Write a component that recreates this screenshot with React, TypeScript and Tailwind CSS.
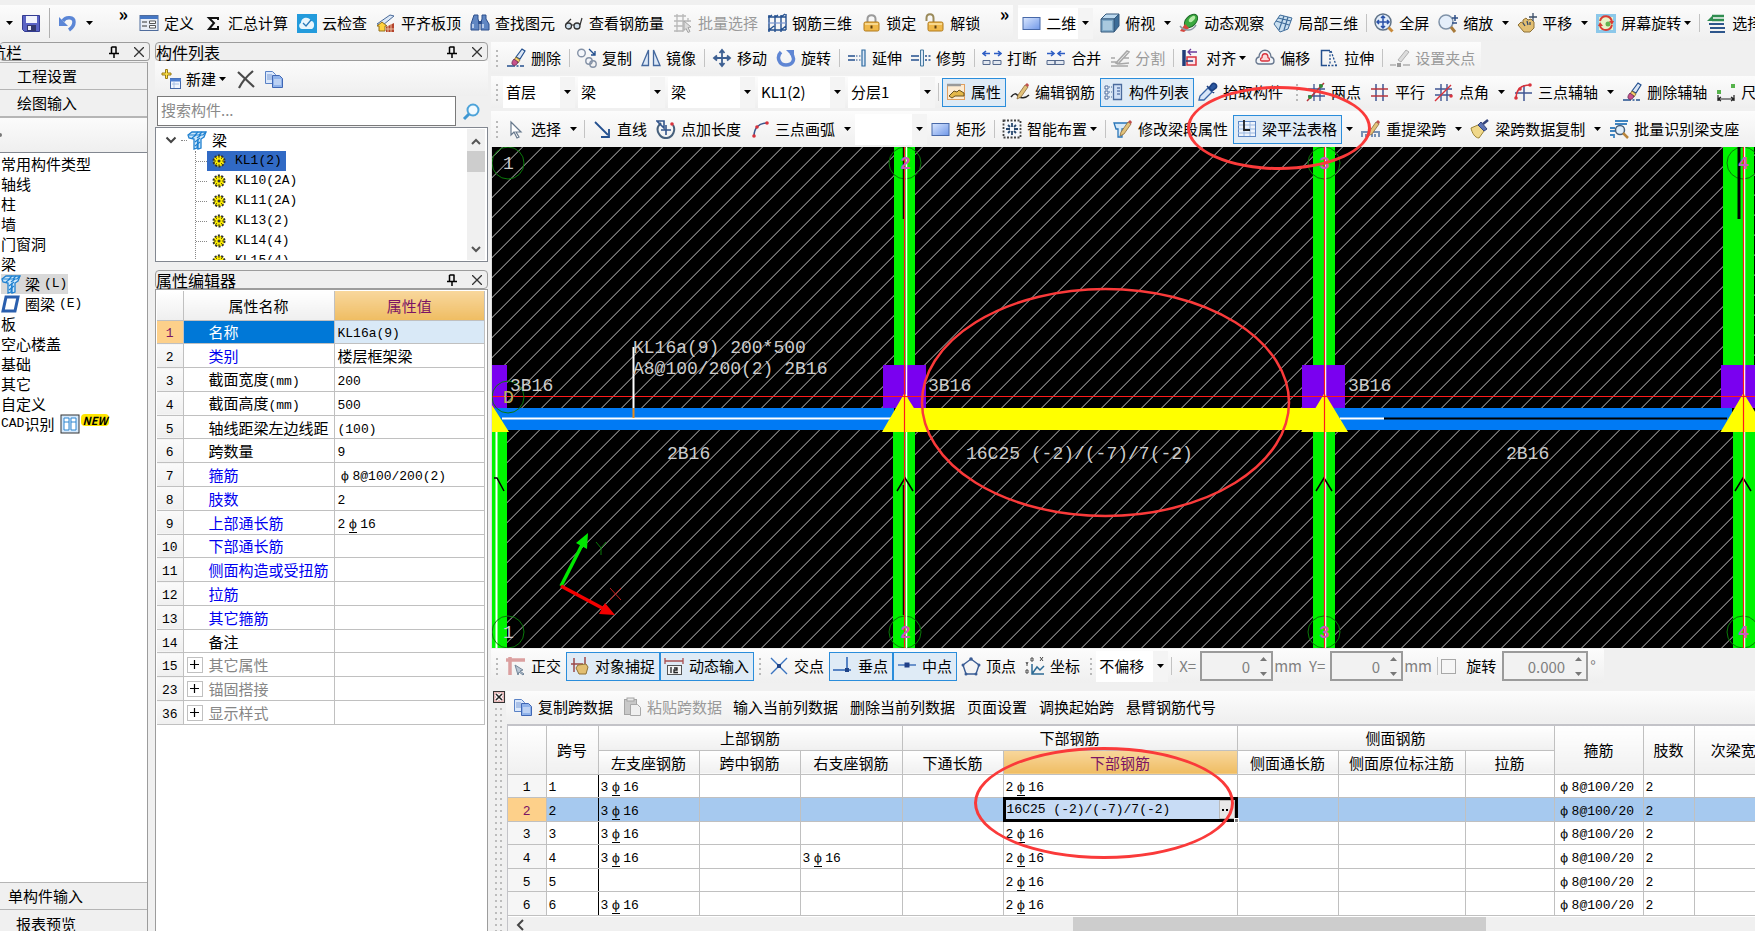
import React, { useState } from 'react';

const B = '#24508f';
const R = '#d8323c';

const pencil = (
  <>
    <path d="M8 13L15 3l3 2-7 10-4 2z" fill="#e2c27a" stroke="#8a6a3a" strokeWidth="0.8" />
    <path d="M15 3l3 2 1-2-2-2z" fill="#c0504d" />
  </>
);

const brush = (
  <>
    <path d="M1 18h17" stroke={B} strokeWidth="1.6" strokeDasharray="8 1.5 2 1.5" />
    <path d="M10 9l6-8 3 2-5 8z" fill="#dbe6f5" stroke={B} strokeWidth="1.2" />
    <path d="M10 9l4 3-2 3-4-3z" fill="#f4d06a" stroke="#75602a" strokeWidth="0.8" />
    <path d="M8 11l4 3c-1 3-3 4-5 3s-1-4 1-6z" fill="#c8528a" stroke="#5d2750" strokeWidth="0.8" />
  </>
);

const copyPages = (
  <>
    <path d="M1.5 2.5h7l3 3v9h-10z" fill="#dbe8fb" stroke="#5a82c6" />
    <path d="M3 6h5M3 8h5M3 10h5" stroke="#7a9bd4" />
    <path d="M8.500 6.500h7l3 3v9h-10z" fill="#8fb2ea" stroke="#3f66b4" />
    <path d="M10 11h7M10 13h7M10 15h7" stroke="#e8f0fd" />
  </>
);

const beam = (
  <>
    <path d="M1 5l4-3h14l-2 5-3 2v9l-3 1V9l-1 9-3 1V9L2 8z" fill="#cfe8fb" stroke="#1f80d0" strokeWidth="1.3" />
    <path d="M2 5h14l3-3M8 5l3-3M12 5l3-3M8 12l5-4M8 16l5-4M5 8l4-3M10 8l4-3" stroke="#1f80d0" strokeWidth="1.2" fill="none" />
  </>
);

const padlock = (
  <>
    <rect x="3" y="9" width="15" height="9" rx="1.500" fill="#efb84a" stroke="#b07a1c" />
    <path d="M4 11h13" stroke="#fbe3a4" strokeWidth="1.500" />
    <path d="M10.500 12.500v3" stroke="#5a3e10" strokeWidth="2" />
  </>
);

const dot4 = (x: number, y: number) => <circle cx={x} cy={y} r="1.800" fill={R} />;

const ICONS: Record<string, React.ReactNode> = {
  save: (
    <>
      <path d="M1.500 2.500h17v16h-15l-2-2z" fill="#5a63c4" stroke="#343c92" />
      <rect x="5" y="3" width="11" height="7" fill="#f2f4fc" />
      <rect x="6" y="12" width="9" height="6" fill="#33386e" />
      <rect x="7" y="13" width="3" height="4" fill="#e8e8f4" />
    </>
  ),
  undo: (
    <>
      <path d="M5 8c3-5 11-4 11 1 0 4-2 6-5 8" fill="none" stroke="#5b86d6" strokeWidth="3.500" />
      <path d="M1 4v9h9z" fill="#5b86d6" />
    </>
  ),
  define: (
    <>
      <rect x="1" y="2.500" width="18" height="15" fill="#e9eef6" stroke="#4f6c9c" />
      <path d="M1 4.500h18" stroke="#4577c4" strokeWidth="3" />
      <path d="M3 9h5M3 13h5" stroke="#333" strokeWidth="1.200" />
      <path d="M10.500 8h6v2.500h-6zM10.500 12.500h6V15h-6z" fill="#fff" stroke="#555" />
    </>
  ),
  sigma: <path d="M15 7V5H6l5 5-5 6h9v-3" fill="none" stroke="#111" strokeWidth="2" />,
  cloud: (
    <>
      <rect x="0" y="1" width="20" height="19" fill="#239bdc" />
      <path d="M5 16c-3 0-4-5-1-6 0-6 8-7 10-2 4 0 4 7 1 8z" fill="#e8f6fd" />
      <path d="M6 10l3 3 5-6" fill="none" stroke="#2a7ab8" strokeWidth="1.300" />
    </>
  ),
  flatTop: (
    <>
      <path d="M1 11L14 2l4 1L7 12z" fill="#dce8f6" stroke="#4a6a9a" />
      <path d="M1 13l5-4 5 4H9v5H3v-5z" fill="#ffd23e" stroke="#94701c" />
      <path d="M10 14l8-4v9h-8z" fill="#b4432c" />
      <path d="M12 13v6M15 11v8M10 16h8" stroke="#e8c0a0" />
    </>
  ),
  binoculars: (
    <>
      <path d="M4 2h4v4l1 3v8H1v-6zM12 2h4v4l3 5v6h-8V9l1-3z" fill="#5f86c2" stroke="#2c4f8c" />
      <path d="M8 8h4v3H8z" fill="#2c4f8c" />
      <path d="M3 11v4M13 11v4" stroke="#d4e2f6" strokeWidth="1.500" />
    </>
  ),
  glasses: (
    <>
      <circle cx="4.500" cy="13" r="3" fill="#cfe0ee" stroke="#333" strokeWidth="1.300" />
      <circle cx="13" cy="13" r="3" fill="#cfe0ee" stroke="#333" strokeWidth="1.300" />
      <path d="M7.500 12h2.500M2 11l5-5M16 12l2-7" stroke="#333" strokeWidth="1.200" fill="none" />
    </>
  ),
  batchSelect: (
    <>
      <path d="M1 3h12M1 8h17M1 13h9M1 18h9M4 1v18M10 1v18M15 5v4" stroke="#b8b8b8" fill="none" strokeWidth="1.300" />
      <path d="M11 8l7 6-3 .5 2 4-2 1-2-4-2 2z" fill="#ddd" stroke="#a5a5a5" />
    </>
  ),
  rebar3d: (
    <>
      <path d="M1 4h18M1 17h18M2 2v17M8 2v17M14 2v17M19 1v16M2 4l3-2M8 4l3-2M14 4l4-3M14 17l5-4M2 17l5-4" stroke={B} fill="none" strokeWidth="1.400" />
      <path d="M1 10h18" stroke="#7a96d0" strokeWidth="1.200" />
    </>
  ),
  lock: (
    <>
      <path d="M6.500 9V6c0-5 8-5 8 0v3" fill="none" stroke="#9a9a9a" strokeWidth="2" />
      {padlock}
    </>
  ),
  unlock: (
    <>
      <path d="M1.500 8V5c0-5 7-5 7 0v4" fill="none" stroke="#9a8a5a" strokeWidth="2" />
      {padlock}
    </>
  ),
  rect: (
    <>
      <defs>
        <linearGradient id="rectFill" x1="0" y1="0" x2="1" y2="1">
          <stop offset="0" stopColor="#dbe8ff" />
          <stop offset="1" stopColor="#6f97e8" />
        </linearGradient>
      </defs>
      <rect x="1" y="4.500" width="17" height="12" fill="url(#rectFill)" stroke="#4768a8" />
    </>
  ),
  cube: (
    <>
      <path d="M1 6l5-5h13l-5 5z" fill="#bcd9ef" stroke="#34597c" />
      <path d="M14 6l5-5v12l-5 6z" fill="#3d6d98" stroke="#34597c" />
      <path d="M1 6h13v13H1z" fill="#7fa9c8" stroke="#34597c" />
      <path d="M3 8h9v9H3z" fill="#a9c9df" />
    </>
  ),
  orbit: (
    <>
      <ellipse cx="12" cy="8" rx="8" ry="5" transform="rotate(-45 12 8)" fill="#3aa83e" stroke="#1d6a28" />
      <ellipse cx="13" cy="6" rx="4" ry="2" transform="rotate(-45 13 6)" fill="#b6eaa8" />
      <path d="M1 18l5-7 4 4-5 4z" fill="#d6453c" />
      <path d="M1 13c5 6 13 5 16-1" fill="none" stroke="#8c96a2" strokeWidth="1.500" />
    </>
  ),
  local3d: (
    <>
      <path d="M1 11l6-9 12 3-4 11-8 3z" fill="#c9dff0" stroke="#3f6c9a" />
      <path d="M3 8l13 4M5 5l13 3M11 3L6 17M15 4l-4 13" stroke="#3f6c9a" fill="none" strokeWidth="1.200" />
    </>
  ),
  fullScreen: (
    <>
      <circle cx="9" cy="9" r="8" fill="#e4eefa" stroke="#5f7288" strokeWidth="1.500" />
      <path d="M9 3v12M3 9h12M7 5l2-2 2 2M7 13l2 2 2-2M5 7L3 9l2 2M13 7l2 2-2 2" stroke="#2a52a8" strokeWidth="1.500" fill="none" />
      <path d="M14.500 14.500l4 4" stroke="#c88a3a" strokeWidth="3" />
    </>
  ),
  zoom: (
    <>
      <circle cx="8" cy="9" r="7" fill="#e4eefa" stroke="#7f92a8" strokeWidth="1.500" />
      <path d="M13 14l4 5" stroke="#a87a3a" strokeWidth="3" />
      <path d="M17 2v6M14 5h6M14 10h5" stroke="#2f4f86" strokeWidth="1.500" />
    </>
  ),
  pan: (
    <>
      <path d="M1 12l3-3 2 1V7l3-2 2 2 3-1 3 3v6l-4 4H7z" fill="#e2bf72" stroke="#8e7136" />
      <path d="M12 4h8M16 0v8M6 10l2 3M10 8l1 4M13 9v3" stroke="#3a4c66" strokeWidth="1.300" />
    </>
  ),
  rotateScreen: (
    <>
      <rect x="0" y="1" width="20" height="19" fill="#8cc8ea" />
      <rect x="3" y="4" width="14" height="13" fill="#e8f2c8" />
      <path d="M4 8c2-7 11-6 12 1M16 12c-2 7-10 6-12 1" fill="none" stroke="#d93c34" strokeWidth="2" />
      <path d="M13 8h5l-2 4zM7 13H2l2-4z" fill="#d93c34" />
      <circle cx="12" cy="11" r="2.500" fill="#62b350" />
    </>
  ),
  floors: (
    <>
      <path d="M5 3h12M5 7h12" stroke="#2f8d50" strokeWidth="2.500" />
      <path d="M2 11h15M3 15h15M3 19h15" stroke="#2d568c" strokeWidth="2" />
      <path d="M0 8l6-6v6z" fill="#2f8d50" />
    </>
  ),
  erase: brush,
  copy: (
    <>
      <circle cx="4.500" cy="5" r="3.800" fill="#f4f6fa" stroke="#8592a6" strokeWidth="1.400" />
      <circle cx="12" cy="13" r="3.200" fill="#f4f6fa" stroke="#8592a6" strokeWidth="1.400" />
      <circle cx="16" cy="16" r="3.200" fill="none" stroke="#8592a6" strokeWidth="1.400" />
      <path d="M12 1l6 6M18 3v4h-4" fill="none" stroke={B} strokeWidth="1.400" />
    </>
  ),
  mirror: (
    <>
      <path d="M7.500 2v15.500H1z" fill="#dce8f7" stroke="#44689e" strokeWidth="1.300" />
      <path d="M12.500 2v15.500H19z" fill="#dce8f7" stroke="#44689e" strokeWidth="1.300" />
    </>
  ),
  move: <path d="M10 2v16M2 10h16M7.500 5L10 2l2.500 3M7.500 15l2.500 3 2.500-3M5 7.500L2 10l3 2.500M15 7.500l3 2.500-3 2.500" fill="none" stroke="#3c5f92" strokeWidth="1.800" />,
  rotate: (
    <>
      <path d="M5 4c-5 5-2 13 5 13s10-6 5-12" fill="none" stroke="#5f86d4" strokeWidth="3.500" />
      <path d="M10 2h8v8z" fill="#5f86d4" />
    </>
  ),
  extend: (
    <>
      <path d="M1 8h7M1 12h7" stroke={B} strokeWidth="1.500" />
      <path d="M9 8h6M9 12h6" stroke={B} strokeDasharray="1.500 1.500" />
      <path d="M15 2h3v16h-3z" fill="#dce8f7" stroke="#2e6aa0" strokeWidth="1.200" />
    </>
  ),
  trim: (
    <>
      <path d="M0 8h8M0 12h8" stroke={B} strokeWidth="1.300" />
      <path d="M14 8h6M14 12h6" stroke={B} strokeDasharray="2 1.500" strokeWidth="1.300" />
      <path d="M9.500 2h3v16h-3z" fill="#dce8f7" stroke="#44789e" />
    </>
  ),
  breakLine: (
    <>
      <path d="M1 12.500h7v4H1zM11 12.500h8v4h-8z" fill="#e3e8f0" stroke="#55698c" />
      <path d="M1 5.500h7M4 3L1 5.500 4 8M12 5.500h7M16 3l3 2.500L16 8" fill="none" stroke="#2d5dc4" strokeWidth="1.600" />
    </>
  ),
  merge: (
    <>
      <path d="M1 12.500h8v4H1zM9 12.500h9v4H9z" fill="#e3e8f0" stroke="#55698c" />
      <path d="M1 5.500h7M5 3l3 2.500L5 8M12 5.500h7M15 3l-3 2.500L15 8" fill="none" stroke="#2d5dc4" strokeWidth="1.600" />
    </>
  ),
  split: <path d="M1 14h7M9 16l10-1M1 18h17M6 15L17 3l2 1-11 12zM1 10h4M13 10h6" fill="none" stroke="#a8a8a8" strokeWidth="1.600" />,
  align: (
    <>
      <path d="M3 2v16" fill="none" stroke="#203c78" strokeWidth="3.500" />
      <path d="M8 4h8M10 1L7 4l3 3" fill="none" stroke="#6a3a9c" strokeWidth="1.300" />
      <path d="M6 9h9v8H6z" fill="#fbe4ea" stroke={R} strokeWidth="1.500" />
      <path d="M5 13h7" stroke="#203c78" strokeWidth="1.500" />
    </>
  ),
  offset: (
    <>
      <path d="M4 16c-4 0-4-6 0-7 0-9 12-9 12 0 4 1 4 7 0 7z" fill="#f3f5f8" stroke="#67778e" strokeWidth="1.300" />
      <path d="M7 13c-2 0-2-3 0-3.500 0-5 6-5 6 0 2 .5 2 3.500 0 3.500z" fill="#fbd9d9" stroke={R} strokeWidth="1.300" />
    </>
  ),
  stretch: (
    <>
      <path d="M11 2.500H2.500v15H8" fill="none" stroke={B} strokeWidth="1.500" />
      <path d="M11 3v14M12 3l5 14M9 17.500h9" fill="none" stroke={B} strokeDasharray="2 1.500" strokeWidth="1.300" />
    </>
  ),
  grip: (
    <>
      <path d="M0 17h6M13 17h7" stroke="#b0b0b0" strokeWidth="1.500" />
      <path d="M7 15h4v4H7z" fill="#9a9a9a" />
      <path d="M8 12L16 2l3 2-8 10z" fill="#dcdcdc" stroke="#b0b0b0" />
    </>
  ),
  props: (
    <>
      <rect x="1.500" y="2.500" width="17" height="15" fill="#fdebd2" stroke="#e0a060" />
      <path d="M1 3h14" stroke="#9a9a9a" strokeWidth="2.500" />
      <path d="M3 14l5-5 3 1 2-2 5 3v3H9l-3 2z" fill="#e4b84a" stroke="#6b5420" />
    </>
  ),
  editRebar: (
    <>
      <path d="M1 15c3-4 5-4 7-1s8 2 11-1" fill="none" stroke="#222" strokeWidth="1.500" />
      {pencil}
    </>
  ),
  listPanel: (
    <>
      <path d="M1 4h3v3H1zM1 9h3v3H1zM1 14h3v3H1z" fill="#fff" stroke="#4a6a9c" />
      <path d="M5 5h3M5 10h3M5 15h3" stroke="#4a6a9c" strokeDasharray="1 1" />
      <path d="M9.500 2.500h8v15h-8z" fill="#cfe0f6" stroke="#4a6a9c" strokeWidth="1.300" />
      <path d="M13 6h3M13 9h3M13 12h3" stroke="#2c4f8c" />
    </>
  ),
  picker: (
    <>
      <path d="M1 18l1-4 8-8 4 4-8 8z" fill="#d8e6f8" stroke="#3a66a6" strokeWidth="1.300" />
      <path d="M9 4l7 7M11 6l3-4c2-2 6 1 4 4l-4 3z" fill="#2c58a0" stroke="#1c3f80" strokeWidth="1.600" />
    </>
  ),
  twoPoint: (
    <>
      <path d="M8 2v17M14 2v17M2 7h17M2 14h17" stroke="#3f5692" strokeWidth="1.300" />
      <path d="M1 19L18 1" stroke="#b8343c" strokeWidth="1.500" />
      <circle cx="4" cy="15" r="2" fill="#328a38" /><circle cx="15" cy="4" r="2" fill="#328a38" />
    </>
  ),
  parallel: (
    <>
      <path d="M6 2v17M13 2v17" stroke="#3f5692" strokeWidth="1.500" />
      <path d="M1 7h17M1 14h17" stroke="#b8343c" strokeWidth="1.500" />
    </>
  ),
  pointAngle: (
    <>
      <path d="M7 2v17M13 2v17M1 7h17M1 13h17" stroke="#3f5692" strokeWidth="1.400" />
      <path d="M1 19L17 3" stroke={R} strokeWidth="1.500" />
      {dot4(17, 14)}
    </>
  ),
  threePoint: (
    <>
      <path d="M2 11h17M11 3v16" stroke="#3f5692" strokeWidth="1.500" />
      <path d="M3 17C3 8 7 3 17 3" fill="none" stroke={R} strokeWidth="1.500" />
      {dot4(3, 16)}{dot4(17, 3)}{dot4(7, 7)}
    </>
  ),
  dimension: (
    <>
      <path d="M2 17h16M2 13v6M18 13v6M5 15l-3 2 3 2M15 15l3 2-3 2" fill="none" stroke="#222" strokeWidth="1.200" />
      <path d="M1 8h4v4H1zM15 2h4v4h-4z" fill="#56b34c" />
    </>
  ),
  pointer: <path d="M5 3v13l3-3 3 6 2-1-3-5h5z" fill="#fff" stroke="#66788c" strokeWidth="1.200" />,
  line: (
    <>
      <path d="M3 3l13 13" stroke={B} strokeWidth="1.800" />
      <path d="M17 10v8H9" fill="none" stroke={B} strokeWidth="1.800" />
    </>
  ),
  addLength: (
    <>
      <path d="M5 4c-8 7 0 16 6 15s9-8 6-13" fill="none" stroke="#46607c" strokeWidth="2" />
      <path d="M1 2h7v7zM10 6v10M5 11h10" fill="none" stroke="#34568c" strokeWidth="1.600" />
      {dot4(16, 5)}
    </>
  ),
  arc: (
    <>
      <path d="M4 17C4 9 9 4 17 4" fill="none" stroke="#3a568c" strokeWidth="1.600" />
      {dot4(4, 17)}{dot4(7, 8)}{dot4(17, 4)}
    </>
  ),
  smart: (
    <>
      <rect x="1.500" y="1.500" width="17" height="17" fill="#f4f7fb" stroke="#444" strokeDasharray="2 1.500" strokeWidth="1.800" />
      <path d="M10 4v4M10 12v4M4 10h4M12 10h4M6 6l2 2M14 6l-2 2M6 14l2-2M14 14l-2-2" stroke="#26476e" strokeWidth="1.800" />
    </>
  ),
  editSpan: (
    <>
      <path d="M1 4h14l-3 6H9v8H5v-8H3z" fill="#d6eafa" stroke="#2a76b8" strokeWidth="1.300" />
      {pencil}
    </>
  ),
  beamTable: (
    <>
      <rect x="1.500" y="2.500" width="17" height="15" fill="#eef4fc" stroke="#5c86c4" />
      <path d="M1 6h17M1 10h17M1 14h17M7 3v14M13 3v14" stroke="#9bb8e0" />
      <path d="M7 1v10h6" fill="none" stroke="#222" strokeWidth="1.800" />
    </>
  ),
  reSpan: (
    <>
      <path d="M1 18v-5h17v5M5 18v-3M11 18v-3M14 18v-3" fill="none" stroke="#7590b4" strokeWidth="2" />
      {pencil}
    </>
  ),
  broom: (
    <>
      <path d="M1 9l7-3 6 6-5 7c-4 0-7-5-8-10z" fill="#f0d88a" stroke="#9c8438" />
      <path d="M8 6l6 6 3-2-6-7z" fill="#5d73b4" stroke="#34447c" />
      <path d="M13 5l5-4" stroke="#34447c" strokeWidth="2.500" />
    </>
  ),
  recognize: (
    <>
      <path d="M6 2h13M6 5h12M1 9h5M1 12h5M1 16h4v3" fill="none" stroke="#3f84c0" strokeWidth="1.800" />
      <circle cx="11" cy="11" r="4.500" fill="#e0eefa" stroke="#46607c" strokeWidth="1.500" />
      <path d="M14 14l5 5" stroke="#b8843a" strokeWidth="2.500" />
    </>
  ),
  ortho: (
    <>
      <path d="M0 4h19M4 1v18" stroke="#dba0a0" strokeWidth="3.500" />
      <path d="M9 9l8 5-3 1 4 3-1 1-4-3-1 3z" fill="#b9c6d4" stroke="#74879a" />
    </>
  ),
  snap: (
    <>
      <path d="M1 8h12M4 2v14M15 1v7" stroke="#9c4a4a" strokeWidth="1.500" />
      <path d="M6 12l2-3 8-1 2 3-2 7H9z" fill="#e2bf72" stroke="#8e7136" />
    </>
  ),
  dynInput: (
    <>
      <path d="M1 5h18M1 2v6M19 2v6" stroke="#a85050" strokeWidth="1.300" />
      <rect x="3.500" y="9.500" width="14" height="9" fill="#f4f4f4" stroke="#555" />
      <path d="M7 11v6M10 12h3v2h-3v2.500h4" fill="none" stroke="#222" strokeWidth="1.300" />
    </>
  ),
  cross: (
    <>
      <path d="M2 2l16 16M18 2L2 18" stroke="#3a74c0" strokeWidth="1.400" />
      <path d="M8 8h4v4H8z" fill="#1f4488" />
    </>
  ),
  perp: (
    <>
      <path d="M0 14h18M14 1v13" stroke="#2a62b4" strokeWidth="1.500" />
      <path d="M12 12h4v4h-4z" fill="#1f4488" />
    </>
  ),
  mid: (
    <>
      <path d="M1 9h18" stroke="#2a62b4" strokeWidth="1.300" />
      <path d="M7.500 6.500h5v5h-5z" fill="#1f3f88" />
    </>
  ),
  vertex: (
    <>
      <path d="M10 3l8 6-3 9H5L2 9z" fill="none" stroke="#3a5c94" strokeWidth="1.400" />
      <circle cx="10" cy="3" r="1.800" fill="#3a5c94" /><circle cx="18" cy="9" r="1.500" fill="#3a5c94" /><circle cx="2" cy="9" r="1.500" fill="#3a5c94" />
      <circle cx="5" cy="18" r="1.500" fill="#3a5c94" /><circle cx="15" cy="18" r="1.500" fill="#3a5c94" />
    </>
  ),
  coord: (
    <>
      <path d="M7 8v10h12M7 18l5-7 3 3 4-4" fill="none" stroke="#2c6a94" strokeWidth="1.500" />
      <path d="M1 6l1 2 1-2M2 8v2M15 1l3 4M18 1l-3 4M6 2h2v3H6zM1 14h2v3H1z" fill="none" stroke="#444" />
    </>
  ),
  copyPages,
  paste: (
    <>
      <rect x="2.500" y="2.500" width="12" height="15" fill="#c8c8c8" stroke="#a4a4a4" />
      <rect x="5" y="1" width="7" height="3" fill="#e8e8e8" stroke="#a4a4a4" />
      <path d="M8.500 7.500h7l3 3v8h-10z" fill="#efefef" stroke="#a8a8a8" />
    </>
  ),
  create: (
    <>
      <path d="M4.500 0.500h2v3.500H10v2H6.500v3.500h-2V6H1V4h3.500z" fill="#ffe44a" stroke="#9a7a14" />
      <rect x="9.500" y="9.500" width="10" height="10" fill="#f2f6fd" stroke="#4468a8" />
      <path d="M9 11h11" stroke="#4f7fd0" strokeWidth="3" />
      <path d="M11 15h7M13 13v6" stroke="#a8c0e4" />
    </>
  ),
  remove: <path d="M2 3l16 15M17 2C11 7 6 13 3 19" fill="none" stroke="#4a4a4a" strokeWidth="2.200" />,
  search: (
    <>
      <circle cx="11" cy="8" r="5.500" fill="#f2faff" stroke="#4da3d9" strokeWidth="2" />
      <path d="M7 12l-5 5" stroke="#3f97d2" strokeWidth="3" />
    </>
  ),
  beam,
  ringBeam: <path d="M5 3h12l-3 14H2z" fill="#fff" stroke="#2a5fae" strokeWidth="3" />,
  cad: (
    <>
      <rect x="1" y="1" width="18" height="18" fill="#d4e8fb" stroke="#333" />
      <path d="M4 4h5v12H4zM11 4h5v12h-5zM4 8h5M11 8h5" fill="#fff" stroke="#2f86d0" />
    </>
  ),
};

function Icon({ name }: { name: string }) {
  return (
    <svg className="w-5 h-5 shrink-0" viewBox="0 0 20 20" aria-hidden="true">
      {ICONS[name]}
    </svg>
  );
}

function Tri() {
  return (
    <svg className="w-[7px] h-1 shrink-0" viewBox="0 0 7 4" aria-hidden="true">
      <path d="M0 0h7L3.500 4z" fill="#000" />
    </svg>
  );
}

type ToolProps = {
  icon?: string;
  label: string;
  pressed?: boolean;
  disabled?: boolean;
  menu?: boolean;
  split?: boolean;
};

function Tool({ icon, label, pressed, disabled, menu, split }: ToolProps) {
  const box = pressed ? 'border-[#2a8ddb] bg-[#dfebf6]' : 'border-transparent';
  const pad = icon ? 'pl-[3px] pr-1' : 'px-[5px]';
  return (
    <>
      <button
        disabled={disabled}
        className={`flex items-center gap-[5px] h-[29px] shrink-0 border whitespace-nowrap ${box} ${pad} ${disabled ? 'text-[#9a9a9a]' : 'text-black'}`}
      >
        {icon && <Icon name={icon} />}
        <span className="flex items-center gap-[3px]">
          {label}
          {menu && <Tri />}
        </span>
      </button>
      {split && (
        <button aria-label={`${label}菜单`} className="flex items-center justify-center w-[15px] h-[29px] shrink-0">
          <Tri />
        </button>
      )}
    </>
  );
}

function Sep() {
  return (
    <span className="w-[7px] shrink-0 flex justify-center">
      <span className="w-px h-[18px] bg-[#c3c3c3]" />
    </span>
  );
}

function Grip() {
  return (
    <span className="w-[10px] shrink-0 flex flex-col items-center gap-[3px]">
      {[0, 1, 2, 3].map(i => <i key={i} className="w-[2px] h-[2px] bg-[#b9b9b9]" />)}
    </span>
  );
}

function Combo({ label, value, width, icon }: { label: string; value: string; width: string; icon?: string }) {
  return (
    <label className={`relative flex items-center h-[31px] shrink-0 bg-white ${icon ? 'pl-1 gap-[1px]' : ''} ${width}`}>
      {icon && <Icon name={icon} />}
      <select aria-label={label} className="appearance-none flex-1 min-w-0 h-full pl-[3px] bg-transparent">
        <option>{value}</option>
      </select>
      <span className="absolute right-0 inset-y-0 w-[15px] bg-[#f4f4f4] flex items-center justify-center pointer-events-none">
        <Tri />
      </span>
    </label>
  );
}

function NumberField({ label, value, width }: { label: string; value: string; width: string }) {
  return (
    <span className={`relative h-[30px] shrink-0 border-2 border-[#9b9b9b] ${width}`}>
      <input aria-label={label} defaultValue={value} disabled className="w-full h-full pr-[21px] text-right text-[#808080] bg-[#f2f2f2]" />
      <svg className="absolute right-1 top-1 w-[7px] h-[19px]" viewBox="0 0 7 19" aria-hidden="true">
        <path d="M0 4l3.500-4L7 4zM0 15h7L3.500 19z" fill="#777" />
      </svg>
    </span>
  );
}

function PanelHeader({ title, clipped }: { title: string; clipped?: boolean }) {
  return (
    <header className={`flex items-center h-[19px] border border-[#9c9c9c] rounded-sm bg-[#efefef] shrink-0 ${clipped ? 'border-l-0' : ''}`}>
      <h2 className={`text-base leading-none whitespace-nowrap ${clipped ? 'w-[22px] overflow-hidden flex justify-end' : ''}`}>{title}</h2>
      <button aria-label={`固定${title}`} className="ml-auto mr-[15px]">
        <svg className="w-[10px] h-3" viewBox="0 0 10 12"><path d="M2.500 1v6M2.500 1h5M7 1v6M0 7.500h10M5 8v4" fill="none" stroke="#000" strokeWidth="1.500" /></svg>
      </button>
      <button aria-label={`关闭${title}`} className="mr-[5px]">
        <svg className="w-[10px] h-[10px]" viewBox="0 0 10 10"><path d="M0 0l10 10M10 0L0 10" stroke="#333" strokeWidth="1.300" /></svg>
      </button>
    </header>
  );
}

const Mono = ({ children }: { children: React.ReactNode }) => <span className="font-['Liberation_Mono',monospace] text-[13px]">{children}</span>;

// "B" marks the second rebar grade, drawn as a phi standing on a bar
function Rebar({ value }: { value: string }) {
  return (
    <Mono>
      {value.split(/([AB](?=\d))/).map((part, i) => {
        if (part === 'A') return <span key={i} className="inline-block w-[15px] text-center">ф</span>;
        if (part === 'B') return <span key={i} className="inline-block w-[15px] text-center"><span className="border-b border-black">ф</span></span>;
        return part;
      })}
    </Mono>
  );
}

const NAV_TOP = ['常用构件类型', '轴线', '柱', '墙', '门窗洞', '梁'];
const NAV_REST = ['板', '空心楼盖', '基础', '其它', '自定义'];
const BEAMS = ['KL1(2)', 'KL10(2A)', 'KL11(2A)', 'KL13(2)', 'KL14(4)', 'KL15(4)'];

type Prop = { no: number; name: string; unit?: string; value?: React.ReactNode; kind?: 'blue' | 'group' };

const PROPS: Prop[] = [
  { no: 1, name: '名称', value: <Mono>KL16a(9)</Mono> },
  { no: 2, name: '类别', value: '楼层框架梁', kind: 'blue' },
  { no: 3, name: '截面宽度', unit: '(mm)', value: <Mono>200</Mono> },
  { no: 4, name: '截面高度', unit: '(mm)', value: <Mono>500</Mono> },
  { no: 5, name: '轴线距梁左边线距', value: <Mono>(100)</Mono> },
  { no: 6, name: '跨数量', value: <Mono>9</Mono> },
  { no: 7, name: '箍筋', value: <Rebar value="A8@100/200(2)" />, kind: 'blue' },
  { no: 8, name: '肢数', value: <Mono>2</Mono>, kind: 'blue' },
  { no: 9, name: '上部通长筋', value: <Rebar value="2B16" />, kind: 'blue' },
  { no: 10, name: '下部通长筋', kind: 'blue' },
  { no: 11, name: '侧面构造或受扭筋', kind: 'blue' },
  { no: 12, name: '拉筋', kind: 'blue' },
  { no: 13, name: '其它箍筋', kind: 'blue' },
  { no: 14, name: '备注' },
  { no: 15, name: '其它属性', kind: 'group' },
  { no: 23, name: '锚固搭接', kind: 'group' },
  { no: 36, name: '显示样式', kind: 'group' },
];

const SPANS = [
  { no: 1, left: '3B16', right: '', bottom: '2B16' },
  { no: 2, left: '3B16', right: '', bottom: '16C25 (-2)/(-7)/7(-2)' },
  { no: 3, left: '3B16', right: '', bottom: '2B16' },
  { no: 4, left: '3B16', right: '3B16', bottom: '2B16' },
  { no: 5, left: '', right: '', bottom: '2B16' },
  { no: 6, left: '3B16', right: '', bottom: '2B16' },
];

function NavPanel() {
  return (
    <aside className="w-[150px] shrink-0 flex flex-col">
      <PanelHeader title="导航栏" clipped />
      <div className="mt-px mr-[2px] flex-1 min-h-0 flex flex-col border-r border-[#9c9c9c]">
        <button className="h-7 shrink-0 pl-[17px] text-left border-t border-b border-[#b5b5b5] bg-[#f0f0f0]">工程设置</button>
        <button className="h-7 shrink-0 pl-[17px] text-left border-b-2 border-[#b5b5b5] bg-[#f0f0f0]">绘图输入</button>
        <div className="h-[34px] shrink-0 bg-linear-to-b from-[#fbfbfb] to-[#efefef] flex items-center">
          <i className="w-[2px] h-1 rounded-r bg-[#777]" />
        </div>
        <ul className="flex-1 min-h-0 overflow-hidden bg-white border-t border-[#828790] pt-px pl-[1px] leading-5">
          {NAV_TOP.map(t => <li key={t}>{t}</li>)}
          <li className="flex"><span className="flex gap-1 w-[67px] bg-[#d9d9d9]"><Icon name="beam" />梁<Mono>(L)</Mono></span></li>
          <li className="flex gap-1"><Icon name="ringBeam" />圈梁<Mono>(E)</Mono></li>
          {NAV_REST.map(t => <li key={t}>{t}</li>)}
          <li className="flex">
            <Mono>CAD</Mono>识别
            <span className="ml-[6px]"><Icon name="cad" /></span>
            <b className="self-start bg-[#ffe600] rounded-sm px-px ml-px text-[11px] leading-3 italic">NEW</b>
          </li>
        </ul>
        <button className="h-7 shrink-0 pl-2 text-left border-t border-b border-[#b5b5b5] bg-[#f0f0f0]">单构件输入</button>
        <button className="h-[21px] shrink-0 pl-4 text-left bg-[#f0f0f0] overflow-hidden leading-7">报表预览</button>
      </div>
    </aside>
  );
}

function Gear() {
  return (
    <svg className="w-[14px] h-[14px] shrink-0" viewBox="0 0 14 14" aria-hidden="true">
      <circle cx="7" cy="7" r="5.500" fill="#ffee00" stroke="#333" strokeWidth="2" strokeDasharray="2 1.450" />
      <path d="M7 2v10M2 7h10M3.500 3.500l7 7M10.500 3.500l-7 7" stroke="#55500a" />
      <circle cx="7" cy="7" r="3" fill="#ffee00" />
      <circle cx="7" cy="7" r="1.500" fill="#333" />
    </svg>
  );
}

function BeamTree() {
  const [selected, setSelected] = useState('KL1(2)');
  return (
    <div className="h-[135px] shrink-0 flex bg-white border border-[#828790] p-px pr-[2px]">
      <div className="flex-1 overflow-hidden leading-5 pt-px">
        <div className="flex items-center h-5 pl-2">
          <svg className="w-3 h-3" viewBox="0 0 12 12"><path d="M1.500 3.500L6 8l4.500-4.500" fill="none" stroke="#444" strokeWidth="2" /></svg>
          <i className="w-[6px] ml-1 border-t border-dotted border-[#888]" />
          <Icon name="beam" />
          <span className="ml-[5px]">梁</span>
        </div>
        <ul className="mt-px ml-[38px] border-l border-dotted border-[#888]">
          {BEAMS.map(b => (
            <li key={b} className="flex items-center h-5">
              <i className="w-[11px] border-t border-dotted border-[#888]" />
              <button onClick={() => setSelected(b)} className={`flex items-center gap-[9px] h-5 pl-[5px] pr-1 ${selected === b ? 'bg-[#316ac5]' : ''}`}>
                <Gear />
                <Mono>{b}</Mono>
              </button>
            </li>
          ))}
        </ul>
      </div>
      <div className="w-[18px] bg-[#f0f0f0] flex flex-col items-center">
        <svg className="w-[10px] h-[22px]" viewBox="0 0 10 22"><path d="M1 15l4-4 4 4" fill="none" stroke="#555" strokeWidth="2" /></svg>
        <i className="w-full h-[21px] bg-[#cdcdcd]" />
        <svg className="w-[10px] h-[22px] mt-auto" viewBox="0 0 10 22"><path d="M1 9l4 4 4-4" fill="none" stroke="#555" strokeWidth="2" /></svg>
      </div>
    </div>
  );
}

function PropertyTable() {
  return (
    <div className="flex-1 min-h-0 bg-white border border-b-0 border-[#9c9c9c] pt-px pl-px pr-[2px] overflow-hidden">
      <table className="w-full h-[434px] table-fixed border-collapse leading-none">
        <colgroup>
          <col className="w-[26px]" />
          <col className="w-[151px]" />
          <col />
        </colgroup>
        <thead>
          <tr className="h-[29px]">
            <th className="bg-linear-to-b from-white to-[#efefef] border-r border-b border-[#c0c0c0]" />
            <th className="bg-linear-to-b from-white to-[#efefef] border-r border-b border-[#c0c0c0] font-normal">属性名称</th>
            <th className="bg-linear-to-b from-[#f8d79c] to-[#efbd62] border-r border-b border-[#c0c0c0] font-normal text-[#7b1464]">属性值</th>
          </tr>
        </thead>
        <tbody>
          {PROPS.map(p => {
            const active = p.no === 1;
            const tone = active ? 'bg-[#0078d7] text-white' : p.kind === 'blue' ? 'text-[#0000f0]' : p.kind === 'group' ? 'text-[#868686]' : '';
            return (
              <tr key={p.no}>
                <th className={`border-r border-b border-[#c0c0c0] p-0 font-normal ${active ? 'bg-[#fdd08a] text-[#7b1464]' : 'bg-linear-to-b from-[#fafafa] to-[#efefef]'}`}><Mono>{p.no}</Mono></th>
                <td className={`border-r border-b border-[#c0c0c0] p-0 whitespace-nowrap ${tone}`}>
                  <div className="flex items-center">
                    <span className="w-[25px] shrink-0 pl-[3px]">
                      {p.kind === 'group' && (
                        <button aria-label={`展开${p.name}`} className="w-4 h-4 border border-[#c0c0c0] bg-white text-black flex items-center justify-center">
                          <svg className="w-[9px] h-[9px]" viewBox="0 0 9 9"><path d="M0 4.500h9M4.500 0v9" stroke="#000" strokeWidth="1.200" /></svg>
                        </button>
                      )}
                    </span>
                    <span>{p.name}{p.unit && <Mono>{p.unit}</Mono>}</span>
                  </div>
                </td>
                <td className={`border-r border-b border-[#c0c0c0] py-0 px-[3px] whitespace-nowrap ${active ? 'bg-[#d9e9f7]' : ''}`}>{p.value}</td>
              </tr>
            );
          })}
        </tbody>
      </table>
    </div>
  );
}

function ComponentPanel() {
  return (
    <aside className="w-[333px] shrink-0 ml-[5px] flex flex-col">
      <PanelHeader title="构件列表" />
      <div className="flex items-center h-[35px] shrink-0 pl-[2px] bg-linear-to-b from-[#fbfbfb] to-[#efefef]">
        <Tool icon="create" label="新建" menu />
        <button aria-label="删除构件" className="ml-[5px]"><Icon name="remove" /></button>
        <button aria-label="复制构件" className="ml-2"><Icon name="copyPages" /></button>
      </div>
      <div className="flex h-[31px] shrink-0 pl-[2px]">
        <input aria-label="搜索构件" placeholder="搜索构件..." className="flex-1 min-w-0 h-[30px] pl-[3px] pb-1 bg-white border border-[#7a7a7a] placeholder:text-[#8a8a8a]" />
        <button aria-label="搜索" className="w-8 flex items-center justify-center"><Icon name="search" /></button>
      </div>
      <BeamTree />
      <div className="h-2 shrink-0" />
      <PanelHeader title="属性编辑器" />
      <PropertyTable />
    </aside>
  );
}

function Column({ x, left, width, lowLeft }: { x: number; left: number; width: number; lowLeft: number }) {
  return (
    <g>
      <rect x={left} y="0" width={width} height="218" fill="#00f400" />
      <rect x={lowLeft} y="283" width="22" height="218" fill="#00f400" />
      <rect x={x - 22} y="218" width="43" height="43" fill="#7a00f0" />
      <circle cx={x} cy="16" r="16" fill="none" stroke="#0a7a0a" />
      <circle cx={x} cy="485" r="16" fill="none" stroke="#0a7a0a" />
      <path d={`M${x + 1.5} 0V261M${x + 1.5} 285V501`} stroke="#fff" strokeWidth="1.500" />
      <path d={`M${x - 8} 344l8-13 8 13`} fill="none" stroke="#000" strokeWidth="1.500" />
    </g>
  );
}

function PlanView() {
  return (
    <svg className="block w-full h-full bg-black border-l border-[#ddd] font-['Liberation_Mono',monospace]" viewBox="0 0 1264 501" preserveAspectRatio="xMinYMin slice" role="img" aria-label="梁平面图">
      <defs>
        <pattern id="hatch" width="20" height="20" patternUnits="userSpaceOnUse">
          <path d="M-1 11.600L11.600 -1M9.600 21L21 9.600" stroke="#c4c4c4" strokeWidth="1" />
        </pattern>
      </defs>
      <rect width="1264" height="501" fill="url(#hatch)" />

      <rect x="0" y="218" width="15" height="43" fill="#7a00f0" />
      <rect x="0" y="283" width="15" height="218" fill="#00f400" />
      <path d="M4.500 283V501" stroke="#fff" strokeWidth="2" />
      <path d="M2 331l3 0 7 13" fill="none" stroke="#000" strokeWidth="1.500" />
      <Column x={413} left={402} width={21} lowLeft={401} />
      <Column x={832} left={821} width={22} lowLeft={821} />
      <Column x={1251} left={1231} width={31} lowLeft={1241} />
      <path d="M411.500 0v72M411.500 338v130" stroke="#000" strokeWidth="1.500" />
      <path d="M1247 0v72" stroke="#000" strokeWidth="3" />

      <rect x="0" y="261" width="402" height="22" fill="#007af4" />
      <path d="M10 271.500H400" stroke="#fff" strokeWidth="1.800" />
      <rect x="840" y="261" width="400" height="22" fill="#007af4" />
      <path d="M848 271.500h44" stroke="#fff" strokeWidth="1.800" />
      <path d="M892 271.500h343" stroke="#000" strokeWidth="1.800" />
      <rect x="413" y="261" width="420" height="22" fill="#ff0" />
      <path d="M0 258l17 27H0zM412.500 246l24.500 39h-47zM832.500 246l23.500 39h-47zM1251.500 246l24 39h-47z" fill="#ff0" />
      <path d="M0 249.500h1264M412.500 0v501M832.500 0v501M1251.500 0v501" stroke="#ff1a1a" strokeWidth="1.200" />

      <path d="M141.500 200v61" stroke="#fff" strokeWidth="2" />
      <path d="M141.500 261v10" stroke="#e88a1a" strokeWidth="2" />

      <g fill="none" stroke="#0a7a0a">
        <circle cx="16" cy="16" r="16" /><circle cx="16" cy="250" r="16" /><circle cx="16" cy="485" r="16" />
      </g>
      <g fontSize="18" fill="#c65cc0" fontWeight="bold">
        <text x="408" y="22">2</text><text x="408" y="491">2</text>
        <text x="827" y="22">3</text><text x="827" y="491">3</text>
        <text x="1246" y="22">4</text><text x="1246" y="491">4</text>
      </g>
      <g fontSize="18" fill="#cccccc">
        <text x="11" y="22">1</text>
        <text x="11" y="256" fill="#b8b060">D</text>
        <text x="11" y="491">1</text>
        <text x="141" y="206">KL16a(9) 200*500</text>
        <text x="141" y="227">A8@100/200(2) 2B16</text>
        <text x="18" y="244">3B16</text>
        <text x="436" y="244">3B16</text>
        <text x="856" y="244">3B16</text>
        <text x="175" y="312">2B16</text>
        <text x="1014" y="312">2B16</text>
        <text x="474" y="312">16C25 (-2)/(-7)/7(-2)</text>
      </g>

      <path d="M69 439l21-41" stroke="#00e800" strokeWidth="3.500" />
      <path d="M96 386l-1 16-11-6z" fill="#00e800" />
      <path d="M69 439l43 23" stroke="#f40000" strokeWidth="3.500" />
      <path d="M123 468l-16-1 6-11z" fill="#f40000" />
      <path d="M104 395l5 6 5-6M109 401v7" fill="none" stroke="#0a7a0a" />
      <path d="M118 441l11 12M129 441l-11 12" stroke="#c01818" />

      <ellipse cx="613.500" cy="255.500" rx="183.500" ry="113.500" fill="none" stroke="#fa3a3a" strokeWidth="2.500" />
    </svg>
  );
}

function SpanTable() {
  const head = 'border-r border-b border-[#c0c0c0] p-0 font-normal bg-linear-to-b from-white to-[#f0f0f0]';
  const cell = 'border-r border-b border-[#c0c0c0] py-0 px-[2px] whitespace-nowrap';
  return (
    <table className="w-[1280px] h-[190px] table-fixed border-collapse leading-none">
      <colgroup>
        <col className="w-[38px]" />
        <col className="w-[52px]" />
        <col className="w-[101px]" />
        <col className="w-[101px]" />
        <col className="w-[102px]" />
        <col className="w-[101px]" />
        <col className="w-[234px]" />
        <col className="w-[101px]" />
        <col className="w-[127px]" />
        <col className="w-[89px]" />
        <col className="w-[89px]" />
        <col className="w-[51px]" />
        <col />
      </colgroup>
      <thead>
        <tr className="h-6">
          <th rowSpan={2} className={head} />
          <th rowSpan={2} className={head}>跨号</th>
          <th colSpan={3} className={head}>上部钢筋</th>
          <th colSpan={2} className={head}>下部钢筋</th>
          <th colSpan={3} className={head}>侧面钢筋</th>
          <th rowSpan={2} className={head}>箍筋</th>
          <th rowSpan={2} className={head}>肢数</th>
          <th rowSpan={2} className={head}>次梁宽度</th>
        </tr>
        <tr className="h-6">
          <th className={head}>左支座钢筋</th>
          <th className={head}>跨中钢筋</th>
          <th className={head}>右支座钢筋</th>
          <th className={head}>下通长筋</th>
          <th className="border-r border-b border-[#c0c0c0] p-0 font-normal text-[#7b1464] bg-linear-to-b from-[#f8d79c] to-[#efbd62]">下部钢筋</th>
          <th className={head}>侧面通长筋</th>
          <th className={head}>侧面原位标注筋</th>
          <th className={head}>拉筋</th>
        </tr>
      </thead>
      <tbody>
        {SPANS.map(s => {
          const active = s.no === 2;
          return (
            <tr key={s.no} className={active ? 'bg-[#a6c9ef]' : 'bg-white'}>
              <th className={`border-r border-b border-[#c0c0c0] p-0 font-normal ${active ? 'bg-[#fdd08a] text-[#7b1464]' : 'bg-[#f6f6f6]'}`}><Mono>{s.no}</Mono></th>
              <td className="border-b border-b-[#c0c0c0] border-r border-r-black py-0 px-[2px]"><Mono>{s.no}</Mono></td>
              <td className={cell}><Rebar value={s.left} /></td>
              <td className={cell} />
              <td className={cell}><Rebar value={s.right} /></td>
              <td className={cell} />
              {active ? (
                <td className="relative p-0">
                  <div className="absolute -inset-px flex items-center border-[3px] border-black bg-[#c8dcf5]">
                    <input aria-label="下部钢筋" defaultValue={s.bottom} className="flex-1 min-w-0 h-full pl-px font-['Liberation_Mono',monospace] text-[13px] bg-transparent" />
                    <button aria-label="编辑下部钢筋" className="w-4 h-full border border-[#bbb] bg-[#e8e8e8] flex items-center justify-center gap-[2px]">
                      <i className="w-[2px] h-[2px] bg-black" /><i className="w-[2px] h-[2px] bg-black" /><i className="w-[2px] h-[2px] bg-black" />
                    </button>
                    <i className="absolute -right-1 -bottom-1 w-[5px] h-[5px] bg-[#808080] border border-white" />
                  </div>
                  <div className="absolute z-10 -left-[30px] -top-[51px] w-[260px] h-[112px] rounded-[50%] border-[3px] border-[#fa3a3a] pointer-events-none" />
                </td>
              ) : (
                <td className={cell}><Rebar value={s.bottom} /></td>
              )}
              <td className={cell} />
              <td className={cell} />
              <td className={cell} />
              <td className={`${cell} overflow-hidden`}><Rebar value="A8@100/20" /></td>
              <td className={cell}><Mono>2</Mono></td>
              <td className={cell} />
            </tr>
          );
        })}
      </tbody>
    </table>
  );
}

export default function App() {
  const bar = 'flex items-center shrink-0 bg-linear-to-b from-[#fcfcfc] to-[#efefef]';
  return (
    <div className="h-screen overflow-hidden flex flex-col bg-[#f0f0f0] text-black text-[15px] leading-5 font-['Noto_Sans_CJK_SC',sans-serif] pt-[5px]">
      <div className="flex h-9 shrink-0">
        <div className={`${bar} w-[134px] pl-[2px]`}>
          <span className="w-[15px] flex justify-center"><Tri /></span>
          <button aria-label="保存" className="px-1"><Icon name="save" /></button>
          <span className="w-[9px] flex justify-center"><i className="w-px h-[30px] bg-[#b0b0b0]" /></span>
          <button aria-label="撤销" className="px-1"><Icon name="undo" /></button>
          <button aria-label="撤销列表" className="w-[15px] flex justify-center"><Tri /></button>
          <button aria-label="更多" className="ml-auto mr-[6px] self-start text-lg leading-4 font-bold">»</button>
        </div>
        <div className={`${bar} pl-px`}>
          <Tool icon="define" label="定义" />
          <Tool icon="sigma" label="汇总计算" />
          <Tool icon="cloud" label="云检查" />
          <Tool icon="flatTop" label="平齐板顶" />
          <Tool icon="binoculars" label="查找图元" />
          <Tool icon="glasses" label="查看钢筋量" />
          <Tool icon="batchSelect" label="批量选择" disabled />
          <Tool icon="rebar3d" label="钢筋三维" />
          <Tool icon="lock" label="锁定" />
          <Tool icon="unlock" label="解锁" />
          <button aria-label="更多工具" className="w-7 pr-1 self-start text-right text-lg leading-4 font-bold">»</button>
        </div>
        <div className={`${bar} ml-[5px] grow`}>
          <Combo label="视图" value="二维" width="w-[75px] mr-[3px]" icon="rect" />
          <Tool icon="cube" label="俯视" split />
          <Tool icon="orbit" label="动态观察" />
          <Tool icon="local3d" label="局部三维" />
          <Sep />
          <Tool icon="fullScreen" label="全屏" />
          <Tool icon="zoom" label="缩放" split />
          <Tool icon="pan" label="平移" split />
          <Tool icon="rotateScreen" label="屏幕旋转" menu />
          <Sep />
          <Tool icon="floors" label="选择楼层" />
        </div>
      </div>

      <div className="flex flex-1 min-h-0 mt-px">
        <NavPanel />
        <ComponentPanel />

        <main className="flex-1 min-w-0 ml-[3px] flex flex-col">
          <div className={`${bar} self-start h-8 pl-[1px] pr-px`}>
            <Grip />
            <Tool icon="erase" label="删除" />
            <Sep />
            <Tool icon="copy" label="复制" />
            <Tool icon="mirror" label="镜像" />
            <Sep />
            <Tool icon="move" label="移动" />
            <Tool icon="rotate" label="旋转" />
            <Sep />
            <Tool icon="extend" label="延伸" />
            <Tool icon="trim" label="修剪" />
            <Sep />
            <Tool icon="breakLine" label="打断" />
            <Tool icon="merge" label="合并" />
            <Tool icon="split" label="分割" disabled />
            <Sep />
            <Tool icon="align" label="对齐" menu />
            <Tool icon="offset" label="偏移" />
            <Tool icon="stretch" label="拉伸" />
            <Sep />
            <Tool icon="grip" label="设置夹点" disabled />
          </div>

          <div className={`${bar} h-8 mt-[2px] pl-[1px]`}>
            <Grip />
            <div className="flex gap-[3px] pl-px">
              <Combo label="楼层" value="首层" width="w-[72px]" />
              <Combo label="构件大类" value="梁" width="w-[87px]" />
              <Combo label="构件类型" value="梁" width="w-[87px]" />
              <Combo label="构件" value="KL1(2)" width="w-[87px]" />
              <Combo label="分层" value="分层1" width="w-[87px]" />
            </div>
            <Sep />
            <Tool icon="props" label="属性" pressed />
            <Tool icon="editRebar" label="编辑钢筋" />
            <Tool icon="listPanel" label="构件列表" pressed />
            <Tool icon="picker" label="拾取构件" />
            <span className="pl-1"><Grip /></span>
            <Tool icon="twoPoint" label="两点" />
            <Tool icon="parallel" label="平行" />
            <Tool icon="pointAngle" label="点角" split />
            <Tool icon="threePoint" label="三点辅轴" split />
            <Tool icon="erase" label="删除辅轴" />
            <Tool icon="dimension" label="尺寸标注" />
          </div>

          <div className={`${bar} h-9 mt-[3px] pl-[1px]`}>
            <Grip />
            <Tool icon="pointer" label="选择" split />
            <Sep />
            <Tool icon="line" label="直线" />
            <Tool icon="addLength" label="点加长度" />
            <Tool icon="arc" label="三点画弧" split />
            <Combo label="画弧半径" value="" width="w-[72px]" />
            <Tool icon="rect" label="矩形" />
            <Sep />
            <Tool icon="smart" label="智能布置" menu />
            <Sep />
            <Tool icon="editSpan" label="修改梁段属性" />
            <div className="relative flex">
              <Tool icon="beamTable" label="梁平法表格" pressed split />
              <div className="absolute z-10 -left-[46px] -top-[29px] w-[184px] h-[84px] rounded-[50%] border-[3px] border-[#fa3a3a] pointer-events-none" />
            </div>
            <Tool icon="reSpan" label="重提梁跨" split />
            <Tool icon="broom" label="梁跨数据复制" split />
            <Tool icon="recognize" label="批量识别梁支座" />
          </div>

          <div className="flex-1 min-h-0">
            <PlanView />
          </div>

          <div className={`${bar} self-start h-[34px] mt-px pl-[1px] pr-2`}>
            <Grip />
            <Tool icon="ortho" label="正交" />
            <Tool icon="snap" label="对象捕捉" pressed />
            <Tool icon="dynInput" label="动态输入" pressed />
            <span className="pl-px"><Grip /></span>
            <Tool icon="cross" label="交点" />
            <Tool icon="perp" label="垂点" pressed />
            <Tool icon="mid" label="中点" pressed />
            <Tool icon="vertex" label="顶点" />
            <Tool icon="coord" label="坐标" />
            <span className="pl-px"><Grip /></span>
            <Combo label="偏移方式" value="不偏移" width="w-[72px]" />
            <Sep />
            <div className="flex items-center text-[#808080]">
              <span className="w-[25px] text-center">X=</span>
              <NumberField label="X偏移" value="0" width="w-[73px]" />
              <span className="w-[31px] pl-px">mm</span>
              <span className="w-[26px] text-center">Y=</span>
              <NumberField label="Y偏移" value="0" width="w-[73px]" />
              <span className="w-[31px] pl-px">mm</span>
            </div>
            <Sep />
            <label className="flex items-center gap-[10px] pr-[6px]">
              <input type="checkbox" className="appearance-none w-[15px] h-[15px] border border-[#a8a8a8] bg-[#f6f6f6]" />
              旋转
            </label>
            <NumberField label="旋转角度" value="0.000" width="w-[86px]" />
            <span className="pl-[2px] text-[#808080]">°</span>
          </div>

          <div className="flex h-60 shrink-0 mt-2">
            <div className="w-[15px] shrink-0 flex flex-col items-center">
              <button aria-label="关闭表格" className="w-3 h-3">
                <svg className="w-3 h-3" viewBox="0 0 12 12"><rect x="0.500" y="0.500" width="11" height="11" fill="#e6b8b8" stroke="#333" /><path d="M3 3l6 6M9 3L3 9" stroke="#fff" strokeWidth="3.500" /><path d="M3 3l6 6M9 3L3 9" stroke="#222" strokeWidth="1.500" /></svg>
              </button>
              <svg className="w-2 flex-1 mt-[5px]" aria-hidden="true">
                <defs><pattern id="dockDots" width="5" height="6" patternUnits="userSpaceOnUse"><rect width="2" height="2" fill="#bcbcbc" /></pattern></defs>
                <rect width="8" height="100%" fill="url(#dockDots)" />
              </svg>
            </div>
            <div className="flex-1 min-w-0 flex flex-col">
              <div className={`${bar} h-8 pl-[3px]`}>
                <Tool icon="copyPages" label="复制跨数据" />
                <Tool icon="paste" label="粘贴跨数据" disabled />
                <Tool label="输入当前列数据" />
                <Tool label="删除当前列数据" />
                <Tool label="页面设置" />
                <Tool label="调换起始跨" />
                <Tool label="悬臂钢筋代号" />
              </div>
              <div className="ml-px mt-px flex-1 min-h-0 overflow-hidden border-l border-t-2 border-[#c3c3c8] bg-white">
                <SpanTable />
                <div className="relative flex items-center h-4 mt-px bg-[#f0f0f0] pl-2">
                  <svg className="w-2 h-3" viewBox="0 0 8 12"><path d="M7 1L2 6l5 5" fill="none" stroke="#444" strokeWidth="2" /></svg>
                  <i className="w-1/3 h-full ml-[549px] bg-[#cdcdcd]" />
                </div>
              </div>
            </div>
          </div>
        </main>
      </div>
    </div>
  );
}
